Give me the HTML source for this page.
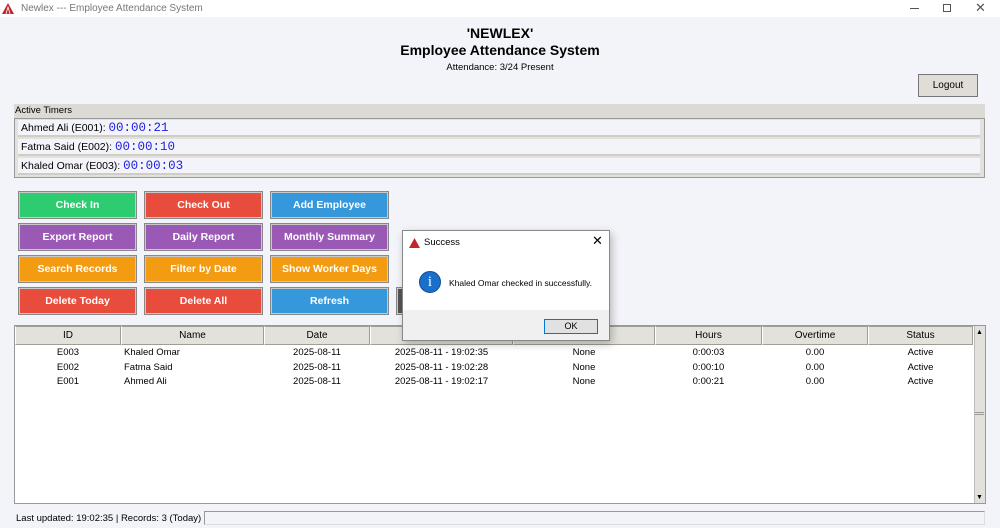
<!DOCTYPE html>
<html><head><meta charset="utf-8"><style>
*{box-sizing:border-box;margin:0;padding:0}
body{width:1000px;height:528px;background:#f3f4f9;font-family:"Liberation Sans",Arial,sans-serif;position:relative;overflow:hidden;font-size:11px;color:#000}
.abs{position:absolute}
.tb{left:0;top:0;width:1000px;height:17px;background:#fff}
.btn{position:absolute;width:119px;height:28px;color:#fff;font-weight:bold;font-size:10.5px;text-align:center;line-height:25px;border:2px solid #c9c9c9;outline:1px solid #888;outline-offset:-1px}
.g{background:#2ecc71}.r{background:#e74c3c}.b{background:#3498db}.p{background:#9b59b6}.o{background:#f39c12}
.row{position:absolute;left:18px;width:962px;height:17px;background:#f3f4f9;border-bottom:2px solid #d0cdc7;font-size:10.5px;line-height:17px;padding-left:3px}
.row span{font-family:"Liberation Mono",monospace;color:#2222dd;font-size:12.5px}
.th{position:absolute;top:326px;height:19px;background:#e3e1dc;border:1px solid #a09d96;border-left-color:#fff;text-align:center;line-height:18px;font-size:10px}
.td{position:absolute;font-size:9.5px;text-align:center}
</style></head><body>
<div class="abs tb"></div>
<svg class="abs" style="left:2px;top:3px" width="12" height="11" viewBox="0 0 12 11"><path d="M6 0L12 11H0Z" fill="#c0262b"/><path d="M4 11L6 4L8 11" stroke="#fff" stroke-width="0.8" fill="none"/></svg>
<div class="abs" style="left:21px;top:3px;color:#777;font-size:10px">Newlex --- Employee Attendance System</div>
<div class="abs" style="left:910px;top:8px;width:9px;height:1px;background:#555"></div>
<div class="abs" style="left:943px;top:4px;width:8px;height:8px;border:1px solid #555"></div>
<div class="abs" style="left:975px;top:0px;font-size:13px;color:#555">✕</div>

<div class="abs" style="left:0;top:25px;width:1000px;text-align:center;font-weight:bold;font-size:14px;line-height:17px">'NEWLEX'<br>Employee Attendance System</div>
<div class="abs" style="left:0;top:62px;width:1000px;text-align:center;font-size:9.5px">Attendance: 3/24 Present</div>
<div class="abs" style="left:918px;top:74px;width:60px;height:23px;background:#e0ddd7;border:1px solid #777;text-align:center;line-height:22px;font-size:10px">Logout</div>

<div class="abs" style="left:14px;top:104px;width:971px;height:14px;background:#dcdad5;font-size:9.5px;padding-left:1px;line-height:13px">Active Timers</div>
<div class="abs" style="left:14px;top:118px;width:971px;height:60px;background:#e3e1dc;border:1px solid #999"></div>
<div class="row" style="top:120px">Ahmed Ali (E001): <span>00:00:21</span></div>
<div class="row" style="top:139px">Fatma Said (E002): <span>00:00:10</span></div>
<div class="row" style="top:158px">Khaled Omar (E003): <span>00:00:03</span></div>

<div class="btn g" style="left:18px;top:191px">Check In</div>
<div class="btn r" style="left:144px;top:191px">Check Out</div>
<div class="btn b" style="left:270px;top:191px">Add Employee</div>
<div class="btn p" style="left:18px;top:223px">Export Report</div>
<div class="btn p" style="left:144px;top:223px">Daily Report</div>
<div class="btn p" style="left:270px;top:223px">Monthly Summary</div>
<div class="btn o" style="left:18px;top:255px">Search Records</div>
<div class="btn o" style="left:144px;top:255px">Filter by Date</div>
<div class="btn o" style="left:270px;top:255px">Show Worker Days</div>
<div class="btn r" style="left:18px;top:287px">Delete Today</div>
<div class="btn r" style="left:144px;top:287px">Delete All</div>
<div class="btn b" style="left:270px;top:287px">Refresh</div>
<div class="btn" style="left:396px;top:287px;background:#555"></div>

<div class="abs" style="left:14px;top:325px;width:972px;height:179px;background:#fff;border:1px solid #999"></div>
<div class="th" style="left:15px;width:106px">ID</div>
<div class="th" style="left:121px;width:143px">Name</div>
<div class="th" style="left:264px;width:106px">Date</div>
<div class="th" style="left:370px;width:143px">Check In</div>
<div class="th" style="left:513px;width:142px">Check Out</div>
<div class="th" style="left:655px;width:107px">Hours</div>
<div class="th" style="left:762px;width:106px">Overtime</div>
<div class="th" style="left:868px;width:105px">Status</div>
<div class="abs" style="left:974px;top:326px;width:11px;height:177px;background:#e3e1dc;border-left:1px solid #bbb"></div>
<div class="abs" style="left:976px;top:329px;font-size:7px">▲</div>
<div class="abs" style="left:976px;top:494px;font-size:7px">▼</div>
<div class="abs" style="left:975px;top:412px;width:9px;height:3px;border-top:1px solid #999;border-bottom:1px solid #999"></div>

<div class="td" style="left:15px;width:106px;top:347px">E003</div>
<div class="td" style="left:124px;top:347px">Khaled Omar</div>
<div class="td" style="left:264px;width:106px;top:347px">2025-08-11</div>
<div class="td" style="left:370px;width:143px;top:347px">2025-08-11 - 19:02:35</div>
<div class="td" style="left:513px;width:142px;top:347px">None</div>
<div class="td" style="left:655px;width:107px;top:347px">0:00:03</div>
<div class="td" style="left:762px;width:106px;top:347px">0.00</div>
<div class="td" style="left:868px;width:105px;top:347px">Active</div>

<div class="td" style="left:15px;width:106px;top:362px">E002</div>
<div class="td" style="left:124px;top:362px">Fatma Said</div>
<div class="td" style="left:264px;width:106px;top:362px">2025-08-11</div>
<div class="td" style="left:370px;width:143px;top:362px">2025-08-11 - 19:02:28</div>
<div class="td" style="left:513px;width:142px;top:362px">None</div>
<div class="td" style="left:655px;width:107px;top:362px">0:00:10</div>
<div class="td" style="left:762px;width:106px;top:362px">0.00</div>
<div class="td" style="left:868px;width:105px;top:362px">Active</div>

<div class="td" style="left:15px;width:106px;top:376px">E001</div>
<div class="td" style="left:124px;top:376px">Ahmed Ali</div>
<div class="td" style="left:264px;width:106px;top:376px">2025-08-11</div>
<div class="td" style="left:370px;width:143px;top:376px">2025-08-11 - 19:02:17</div>
<div class="td" style="left:513px;width:142px;top:376px">None</div>
<div class="td" style="left:655px;width:107px;top:376px">0:00:21</div>
<div class="td" style="left:762px;width:106px;top:376px">0.00</div>
<div class="td" style="left:868px;width:105px;top:376px">Active</div>

<div class="abs" style="left:16px;top:513px;font-size:9.5px;white-space:nowrap">Last updated: 19:02:35 | Records: 3 (Today)</div>
<div class="abs" style="left:204px;top:511px;width:781px;height:14px;border:1px solid #999;border-right-color:#ddd;border-bottom-color:#ddd"></div>

<div class="abs" style="left:402px;top:230px;width:208px;height:111px;background:#fff;border:1px solid #888;box-shadow:2px 3px 8px rgba(0,0,0,.25)">
  <svg class="abs" style="left:6px;top:7px" width="11" height="10" viewBox="0 0 12 11"><path d="M6 0L12 11H0Z" fill="#c0262b"/></svg>
  <div class="abs" style="left:21px;top:6px;font-size:9.5px">Success</div>
  <div class="abs" style="left:189px;top:2px;font-size:13px">✕</div>
  <div class="abs" style="left:16px;top:40px;width:22px;height:22px;border-radius:50%;background:#1a6fc9;border:1px solid #0c4c94;color:#fff;text-align:center;font-size:15px;line-height:20px;font-family:'Liberation Serif',serif">i</div>
  <div class="abs" style="left:46px;top:47px;font-size:8.5px;white-space:nowrap">Khaled Omar checked in successfully.</div>
  <div class="abs" style="left:0;top:79px;width:206px;height:30px;background:#f0f0f0"></div>
  <div class="abs" style="left:141px;top:88px;width:54px;height:15px;background:#e1e1e1;border:1px solid #0078d7;text-align:center;font-size:9px;line-height:13px">OK</div>
</div>
</body></html>
